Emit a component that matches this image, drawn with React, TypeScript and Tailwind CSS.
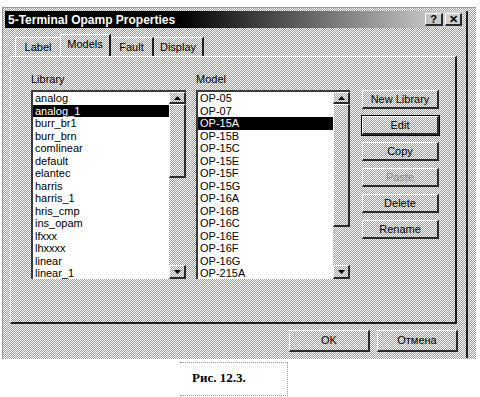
import React from 'react';

// 1px checker to imitate the dithered grey of the old dialog
const dither = 'bg-[image:repeating-conic-gradient(#ffffff_0%_25%,#9c9c9c_0%_50%)] bg-[length:2px_2px]';
const raised =
  'border-t border-l border-t-white border-l-white border-r-2 border-b-2 border-r-[#2a2a2a] border-b-[#2a2a2a]';

const libraries = [
  'analog', 'analog_1', 'burr_br1', 'burr_brn', 'comlinear', 'default', 'elantec', 'harris',
  'harris_1', 'hris_cmp', 'ins_opam', 'lfxxx', 'lhxxxx', 'linear', 'linear_1',
];

const models = [
  'OP-05', 'OP-07', 'OP-15A', 'OP-15B', 'OP-15C', 'OP-15E', 'OP-15F', 'OP-15G',
  'OP-16A', 'OP-16B', 'OP-16C', 'OP-16E', 'OP-16F', 'OP-16G', 'OP-215A',
];

const Arrow: React.FC<{ down?: boolean }> = ({ down }) => (
  <svg width="7" height="4" viewBox="0 0 7 4" className={down ? 'rotate-180' : ''}>
    <path d="M0 4 L3.5 0 L7 4 Z" fill="#000" />
  </svg>
);

const ListBox: React.FC<{ items: string[]; selected: string; thumbClass: string }> = ({ items, selected, thumbClass }) => (
  <div className="flex h-[189px] border-t-2 border-l-2 border-[#3a3a3a]">
    <div className="flex-1 bg-white overflow-hidden">
      {items.map(item => (
        <div
          key={item}
          className={`h-[12.5px] leading-[12.5px] pl-[2px] whitespace-nowrap ${item === selected ? 'bg-black text-white' : ''}`}
        >
          {item}
        </div>
      ))}
    </div>
    <div className="w-[17px] flex flex-col">
      <div className={`h-[12px] flex items-center justify-center ${raised}`}>
        <Arrow />
      </div>
      <div className={`${thumbClass} ${raised}`} />
      <div className="flex-1" />
      <div className={`h-[14px] flex items-center justify-center ${raised}`}>
        <Arrow down />
      </div>
    </div>
  </div>
);

const SideButton: React.FC<{ label: string; isDefault?: boolean; disabled?: boolean }> = ({ label, isDefault, disabled }) => (
  <div
    className={`h-[19px] flex items-center justify-center ${raised} ${isDefault ? 'outline outline-1 outline-black' : ''} ${disabled ? 'text-[#8a8a8a]' : ''}`}
  >
    {label}
  </div>
);

export default function App() {
  return (
    <div className="w-[480px] h-[397px] bg-white pt-[7px] pl-[2px] font-['Liberation_Sans',Arial,sans-serif] text-[11px] text-black">
      <div className={`w-[474px] h-[352px] border border-dotted border-[#9a9a9a] pl-[2px] pt-[3px] ${dither}`}>
        <div className="w-[463px] h-[347px] border-r-2 border-[#202020] flex flex-col">
          {/* title bar */}
          <div className="h-[17px] w-[458px] flex items-center pl-[3px] pr-[1px] bg-[linear-gradient(to_right,#000000_0%,#000000_38%,#d0d0d0_96%)]">
            <span className="font-bold text-[12px] text-white">5-Terminal Opamp Properties</span>
            <div className="ml-auto flex gap-[2px]">
              <div className={`w-[18px] h-[13px] flex items-center justify-center text-[11px] font-bold leading-none ${raised}`}>?</div>
              <div className={`w-[17px] h-[13px] flex items-center justify-center text-[11px] font-bold leading-none ${raised}`}>✕</div>
            </div>
          </div>

          {/* tabs */}
          <div className="flex items-end h-[22px] mt-[6px] ml-[10px]">
            <div className="w-[45px] h-[19px] flex items-center justify-center border-t border-l border-white">Label</div>
            <div className="w-[51px] h-[22px] flex items-center justify-center pb-[2px] border-t border-l border-t-white border-l-white border-r-2 border-r-[#202020]">
              Models
            </div>
            <div className="w-[43px] h-[19px] flex items-center justify-center border-t border-t-white border-r-2 border-r-[#202020]">Fault</div>
            <div className="w-[50px] h-[19px] flex items-center justify-center border-t border-t-white border-r-2 border-r-[#202020]">Display</div>
          </div>

          {/* tab page */}
          <div className="ml-[5px] w-[447px] h-[268px] flex pl-[20px] pt-[15px] border-t border-l border-t-white border-l-white border-r-2 border-b-2 border-r-[#202020] border-b-[#202020]">
            <div className="w-[155px] flex flex-col">
              <div className="h-[14px] leading-[14px] mb-[4px]">Library</div>
              <ListBox items={libraries} selected="analog_1" thumbClass="h-[74px]" />
            </div>
            <div className="w-[154px] ml-[10px] flex flex-col">
              <div className="h-[14px] leading-[14px] mb-[4px]">Model</div>
              <ListBox items={models} selected="OP-15A" thumbClass="h-[123px]" />
            </div>
            <div className="w-[77px] ml-[12px] mt-[18px] flex flex-col gap-[7px]">
              <SideButton label="New Library" />
              <SideButton label="Edit" isDefault />
              <SideButton label="Copy" />
              <SideButton label="Paste" disabled />
              <SideButton label="Delete" />
              <SideButton label="Rename" />
            </div>
          </div>

          {/* dialog buttons */}
          <div className="mt-[6px] flex justify-end gap-[7px] pr-[8px]">
            <div className={`w-[81px] h-[22px] flex items-center justify-center ${raised}`}>OK</div>
            <div className={`w-[81px] h-[22px] flex items-center justify-center ${raised}`}>Отмена</div>
          </div>
        </div>
      </div>

      <div className="ml-[178px] mt-[3px] w-[108px] h-[34px] border-t border-r border-b border-dotted border-[#9a9a9a] pl-[12px] pt-[5px] font-['Liberation_Serif','Times_New_Roman',serif] text-[13px] font-bold">
        Рис. 12.3.
      </div>
    </div>
  );
}
